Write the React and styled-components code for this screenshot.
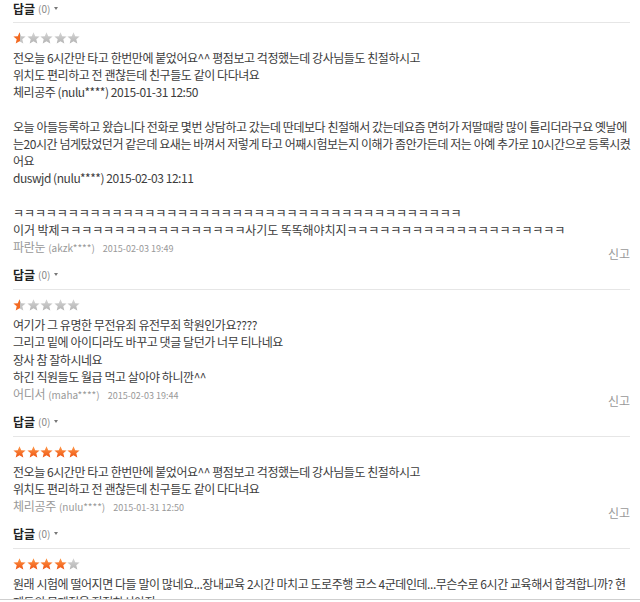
import { useId } from 'react';
import styled, { createGlobalStyle } from 'styled-components';

const GlobalStyle = createGlobalStyle`
  body {
    margin: 0;
    background: #fff;
    font-family: "Noto Sans CJK KR", "Noto Sans", sans-serif;
  }
`

const Frame = styled.div`
  width: 640px;
  height: 599px;
  overflow: hidden;
  border-bottom: 1px solid #cfcfcf;
`

const List = styled.div`
  padding: 0 10px 0 13px;
`

const ReplyToggle = styled.div`
  display: flex;
  align-items: center;
  height: 17px;
  padding-bottom: ${({ $first }) => ($first ? '5px' : '6px')};
  margin-top: ${({ $first }) => ($first ? '0' : '4px')};
  font-size: 12px;
  color: #222;
  & > b {
    font-weight: bold;
  }
`

const Count = styled.span`
  margin-left: 3px;
  font-size: 10px;
  color: #888;
`

const Caret = styled.span`
  margin-left: 4px;
  width: 0;
  height: 0;
  border-left: 2.5px solid transparent;
  border-right: 2.5px solid transparent;
  border-top: 3px solid #777;
`

const Divider = styled.div`
  border-top: 1px solid #e6e6e6;
`

const Review = styled.div`
  padding-top: 9px;
`

const StarRow = styled.div`
  display: flex;
  gap: 0.6px;
  height: 12px;
`

const Body = styled.div`
  margin-top: 5px;
  font-size: 12px;
  line-height: 17.2px;
  color: #3c3c3c;
`

const Line = styled.div`
  white-space: nowrap;
  min-height: 17.2px;
  letter-spacing: ${({ $loose }) => ($loose ? '-0.1px' : '-0.45px')};
`

const Meta = styled.div`
  display: flex;
  justify-content: space-between;
  align-items: flex-end;
  height: 24px;
  color: #999;
`

const Author = styled.div`
  align-self: flex-start;
  height: 17px;
  line-height: 17px;
  font-size: 12px;
  letter-spacing: -0.3px;
  color: #999;
`

const Small = styled.span`
  font-size: ${({ $size }) => $size}px;
  margin-left: ${({ $gap }) => $gap}px;
  letter-spacing: 0;
`

const Report = styled.span`
  font-size: 12px;
  line-height: 17px;
  color: #999;
`

const Star = ({ kind }) => {
  const id = useId();
  const orange = `${id}o`;
  const gray = `${id}g`;
  const half = `${id}h`;
  const fill = kind === 'full' ? orange : kind === 'half' ? half : gray;
  return (
    <svg width="13" height="12" viewBox="0 0 13 12">
      <defs>
        <linearGradient id={orange} x1="0" y1="0" x2="0" y2="1">
          <stop offset="0" stopColor="#ff9a4a" />
          <stop offset="1" stopColor="#ee5211" />
        </linearGradient>
        <linearGradient id={gray} x1="0" y1="0" x2="0" y2="1">
          <stop offset="0" stopColor="#d6d6d6" />
          <stop offset="1" stopColor="#b3b3b3" />
        </linearGradient>
        <linearGradient id={half} x1="0" y1="0" x2="1" y2="0">
          <stop offset="0.5" stopColor="#f36a22" />
          <stop offset="0.5" stopColor="#c4c4c4" />
        </linearGradient>
      </defs>
      <polygon
        points="6.5,0.3 8.2,4.2 12.6,4.5 9.3,7.2 10.3,11.5 6.5,9.2 2.7,11.5 3.7,7.2 0.4,4.5 4.8,4.2"
        fill={`url(#${fill})`}
      />
    </svg>
  );
};

const Stars = ({ rating }) => (
  <StarRow>
    {[0, 1, 2, 3, 4].map(i => (
      <Star
        key={i}
        kind={rating >= i + 1 ? 'full' : rating > i ? 'half' : 'empty'}
      />
    ))}
  </StarRow>
);

const reviews = [
  {
    rating: 0.5,
    lines: [
      '전오늘 6시간만 타고 한번만에 붙었어요^^ 평점보고 걱정했는데 강사님들도 친절하시고',
      '위치도 편리하고 전 괜찮든데 친구들도 같이 다다녀요',
      '체리공주 (nulu****) 2015-01-31 12:50',
      '',
      '오늘 아들등록하고 왔습니다 전화로 몇번 상담하고 갔는데 딴데보다 친절해서 갔는데요즘 면허가 저딸때랑 많이 틀리더라구요 옛날에',
      '는20시간 넘게탔었던거 같은데 요새는 바껴서 저렇게 타고 어째시험보는지 이해가 좀안가든데 저는 아예 추가로 10시간으로 등록시켰',
      '어요',
      'duswjd (nulu****) 2015-02-03 12:11',
      '',
      'ㅋㅋㅋㅋㅋㅋㅋㅋㅋㅋㅋㅋㅋㅋㅋㅋㅋㅋㅋㅋㅋㅋㅋㅋㅋㅋㅋㅋㅋㅋㅋㅋㅋㅋㅋㅋㅋㅋㅋㅋㅋ',
      '이거 박제ㅋㅋㅋㅋㅋㅋㅋㅋㅋㅋㅋㅋㅋㅋㅋㅋㅋ사기도 똑똑해야치지ㅋㅋㅋㅋㅋㅋㅋㅋㅋㅋㅋㅋㅋㅋㅋㅋㅋㅋㅋㅋ',
    ],
    name: '파란눈',
    id: '(akzk****)',
    date: '2015-02-03 19:49',
  },
  {
    rating: 0.5,
    lines: [
      '여기가 그 유명한 무전유죄 유전무죄 학원인가요????',
      '그리고 밑에 아이디라도 바꾸고 댓글 달던가 너무 티나네요',
      '장사 참 잘하시네요',
      '하긴 직원들도 월급 먹고 살아야 하니깐^^',
    ],
    name: '어디서',
    id: '(maha****)',
    date: '2015-02-03 19:44',
  },
  {
    rating: 5,
    lines: [
      '전오늘 6시간만 타고 한번만에 붙었어요^^ 평점보고 걱정했는데 강사님들도 친절하시고',
      '위치도 편리하고 전 괜찮든데 친구들도 같이 다다녀요',
    ],
    name: '체리공주',
    id: '(nulu****)',
    date: '2015-01-31 12:50',
  },
  {
    rating: 4,
    lines: [
      '원래 시험에 떨어지면 다들 말이 많네요...장내교육 2시간 마치고 도로주행 코스 4군데인데...무슨수로 6시간 교육해서 합격합니까? 현',
      '제도의 문제점을 지적하셔야지 ....ㅋㅋ',
    ],
    name: '',
  },
];

const Reply = ({ first }) => (
  <ReplyToggle $first={first}>
    <b>답글</b>
    <Count>(0)</Count>
    <Caret />
  </ReplyToggle>
);

const App = () => (
  <>
    <GlobalStyle />
    <Frame>
      <List>
        <Reply first />
        {reviews.map((r, idx) => (
          <div key={idx}>
            <Divider />
            <Review>
              <Stars rating={r.rating} />
              <Body>
                {r.lines.map((line, i) => (
                  <Line key={i} $loose={line.includes('ㅋㅋㅋㅋ')}>
                    {line}
                  </Line>
                ))}
              </Body>
              {r.name && (
                <>
                  <Meta>
                    <Author>
                      {r.name}
                      <Small $size={10} $gap={3}>{r.id}</Small>
                      <Small $size={9} $gap={8}>{r.date}</Small>
                    </Author>
                    <Report>신고</Report>
                  </Meta>
                  <Reply />
                </>
              )}
            </Review>
          </div>
        ))}
      </List>
    </Frame>
  </>
);

export default App;
